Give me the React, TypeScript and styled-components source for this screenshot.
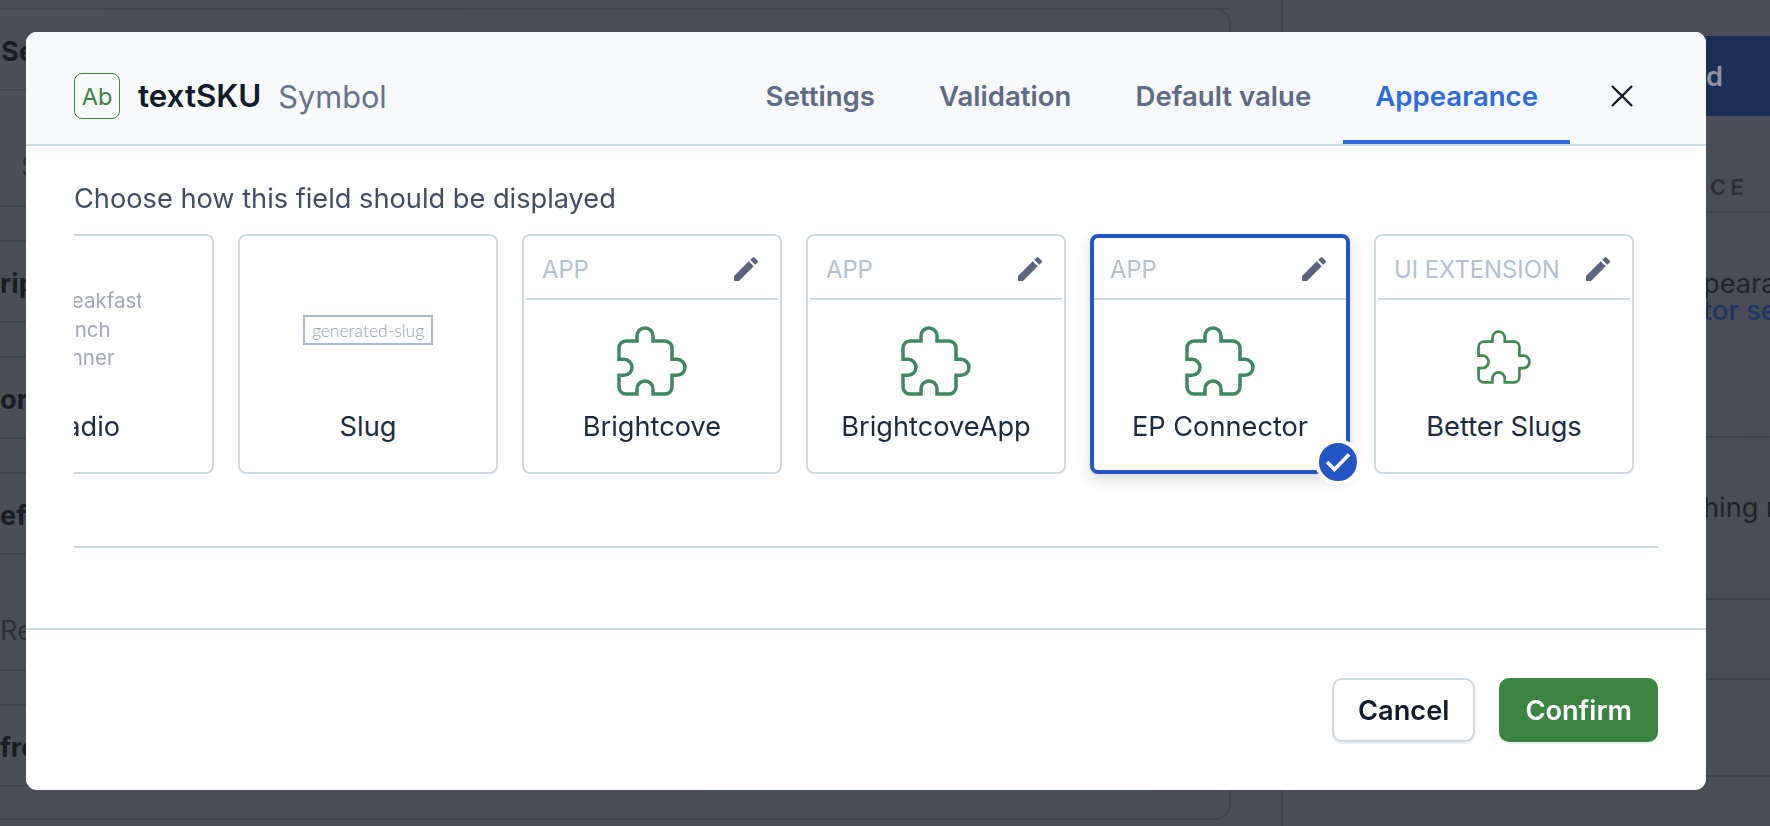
import React from "react";
import styled, { createGlobalStyle } from "styled-components";

const Global = createGlobalStyle`
  html, body { margin: 0; padding: 0; height: 100%; overflow: hidden; background: #4b4f55; }
  * { box-sizing: border-box; }
  body { font-family: Inter, "Liberation Sans", sans-serif; -webkit-font-smoothing: antialiased; }
`;

const Page = styled.div`
  width: 1770px;
  height: 826px;
  display: grid;
  grid-template-columns: 1231px 50px 489px;
  background: linear-gradient(120deg, #4c5056 0%, #4a4e55 60%, #494d54 100%);
  overflow: hidden;
`;

const BackList = styled.div`
  margin-top: 8px;
  height: 812px;
  border: 2px solid #41464d;
  border-left: 0;
  border-radius: 0 16px 16px 0;
  display: flex;
  flex-direction: column;
  gap: 35px;
  margin-bottom: 6px;
`;

const BackRow = styled.div<{ $indent?: number; $soft?: boolean }>`
  height: 83px;
  flex: none;
  margin-top: -2px;
  border-bottom: 2px solid #41464d;
  border-top: ${(p) => (p.$soft ? "0" : "2px solid #41464d")};
  display: flex;
  align-items: center;
  padding: 4px 0 0 ${(p) => p.$indent ?? 0}px;
  font-size: 27.2px;
  font-weight: ${(p) => (p.$soft ? 400 : 700)};
  color: ${(p) => (p.$soft ? "#2a3039" : "#171c26")};
  white-space: nowrap;
`;

const Spacer = styled.div``;

const SidePanel = styled.aside`
  border-left: 2px solid #41464d;
  display: flex;
  flex-direction: column;
  padding-top: 36px;
`;

const PublishBar = styled.div`
  height: 80px;
  flex: none;
  background: #1a2f55;
  color: #8e95a3;
  font-size: 27.2px;
  font-weight: 600;
  display: flex;
  align-items: center;
  padding-left: 423px;
`;

const SideHeading = styled.div`
  height: 97px;
  flex: none;
  border-bottom: 2px solid #3f444b;
  padding: 56px 0 0 427px;
  font-size: 22px;
  font-weight: 600;
  letter-spacing: 4px;
  color: #2b3038;
  line-height: 30px;
`;

const SideSection = styled.div<{ $h: number; $top: number }>`
  height: ${(p) => p.$h}px;
  flex: none;
  border-bottom: 2px solid #3f444b;
  padding: ${(p) => p.$top}px 0 0 420px;
  font-size: 27.2px;
  line-height: 27px;
  color: #1e2229;
  white-space: nowrap;
`;

const SideLink = styled.div`
  color: #1c3563;
  font-weight: 500;
`;

const Modal = styled.div`
  position: fixed;
  left: 26px;
  top: 32px;
  width: 1680px;
  height: 758px;
  background: #fff;
  border-radius: 11px;
  display: flex;
  flex-direction: column;
  overflow: hidden;
`;

const Header = styled.header`
  height: 114px;
  flex: none;
  background: #f7f9fa;
  border-bottom: 2px solid #cfd9e0;
  display: flex;
  align-items: stretch;
  padding-left: 48px;
`;

const TitleGroup = styled.div`
  display: flex;
  align-items: center;
  padding-top: 16px;
  flex: 1;
`;

const TypeBadge = styled.div`
  width: 46px;
  height: 46px;
  border: 1.8px solid #3c8442;
  border-radius: 8px;
  display: flex;
  align-items: center;
  justify-content: center;
  color: #3c8442;
  font-size: 23.5px;
  font-weight: 400;
  margin-right: 18px;
`;

const Title = styled.span`
  font-size: 31.3px;
  font-weight: 600;
  color: #111b2b;
  margin-right: 17px;
`;

const TitleType = styled.span`
  font-size: 30.7px;
  color: #67728a;
`;

const Tabs = styled.nav`
  display: flex;
  align-items: stretch;
`;

const Tab = styled.div<{ $active?: boolean }>`
  padding: 20px 32px 0;
  display: flex;
  align-items: center;
  font-size: 27.6px;
  font-weight: 600;
  color: ${(p) => (p.$active ? "#2f6bdc" : "#5f6a84")};
  border-bottom: 4px solid ${(p) => (p.$active ? "#2f6bdc" : "transparent")};
`;

const CloseButton = styled.div`
  width: 48px;
  margin: 16px 60px 0 28px;
  display: flex;
  align-items: center;
  justify-content: center;
  color: #111b2b;
`;

const Body = styled.main`
  flex: 1;
  padding: 33px 48px 0;
`;

const Intro = styled.div`
  font-size: 27.2px;
  line-height: 40px;
  color: #414d63;
  margin-bottom: 15px;
`;

const CardClip = styled.div`
  overflow: hidden;
  padding-bottom: 24px;
`;

const CardTrack = styled.div`
  display: flex;
  gap: 24px;
  margin-left: -120px;
`;

const Card = styled.div<{ $selected?: boolean }>`
  position: relative;
  flex: none;
  width: 260px;
  height: 240px;
  background: #fff;
  border-radius: 8px;
  border: ${(p) => (p.$selected ? "4px solid #2355c5" : "2px solid #cfd9e0")};
  padding: ${(p) => (p.$selected ? "0" : "2px")};
  box-shadow: ${(p) => (p.$selected ? "0 6px 14px rgba(25,40,70,.16)" : "none")};
  display: flex;
  flex-direction: column;
`;

const CardHead = styled.div`
  height: 62px;
  flex: none;
  margin-top: 0;
  border-bottom: 2px solid #cfd9e0;
  display: flex;
  align-items: center;
  justify-content: space-between;
  padding: 2px 16px 0 16px;
`;

const Origin = styled.span`
  font-size: 23.8px;
  color: #b4c0cf;
`;

const Preview = styled.div`
  flex: 1;
  padding-top: 15px;
  display: flex;
  align-items: center;
  justify-content: center;
`;

const CardName = styled.div`
  flex: none;
  height: 40px;
  margin-bottom: 23px;
  font-size: 27.2px;
  line-height: 40px;
  text-align: center;
  color: #1c2a3e;
  white-space: nowrap;
`;

const ChoiceList = styled.div`
  width: 122px;
  margin-right: 8px;
  overflow: hidden;
  padding-left: 32px;
  font-size: 20.5px;
  line-height: 28.7px;
  color: #a3a8b5;
  white-space: nowrap;
`;

const SlugBox = styled.div`
  width: 130px;
  height: 30px;
  border: 2px solid #aeb8cc;
  display: flex;
  align-items: center;
  justify-content: center;
  font-family: Lato, sans-serif;
  font-size: 17.5px;
  font-weight: 300;
  color: #969dac;
`;

const PuzzleSvg = styled.svg<{ $small?: boolean }>`
  display: block;
  margin-bottom: ${(p) => (p.$small ? "8px" : "0")};
`;

const CheckBadge = styled.div`
  position: absolute;
  right: -15px;
  bottom: -15px;
  width: 46px;
  height: 46px;
  border-radius: 50%;
  background: #2355c5;
  border: 4px solid #fff;
  display: flex;
  align-items: center;
  justify-content: center;
`;

const Rule = styled.hr`
  border: 0;
  height: 2px;
  background: #cfd9e0;
  margin: 48px 0 0;
`;

const Footer = styled.footer`
  flex: none;
  height: 162px;
  border-top: 2px solid #cfd9e0;
  padding: 48px 48px 48px;
  display: flex;
  justify-content: flex-end;
  gap: 24px;
`;

const Button = styled.div<{ $primary?: boolean }>`
  height: 64px;
  padding: 0 ${(p) => (p.$primary ? "26px" : "24px")};
  display: flex;
  align-items: center;
  border-radius: 10px;
  font-size: 27.2px;
  font-weight: 600;
  color: ${(p) => (p.$primary ? "#fff" : "#111b2b")};
  background: ${(p) => (p.$primary ? "#3c8442" : "#fff")};
  border: ${(p) => (p.$primary ? "0" : "2px solid #cfd9e0")};
  box-shadow: 0 2px 1px rgba(17, 27, 43, 0.08);
`;

const Pencil = () => (
  <svg width="32" height="32" viewBox="0 0 24 24" fill="#5b6580" aria-hidden="true">
    <path d="M3 17.25V21h3.75L17.81 9.94l-3.75-3.75L3 17.25z" />
    <path d="M20.71 7.04a1 1 0 0 0 0-1.41l-2.34-2.34a1 1 0 0 0-1.41 0l-1.83 1.83 3.75 3.75 1.83-1.83z" />
  </svg>
);

const Puzzle = ({ size = 70, color = "#3d8763" }: { size?: number; color?: string }) => (
  <PuzzleSvg $small={size < 70} width={size} height={size} viewBox="0 0 70 70" fill="none" stroke={color} strokeWidth="3.5" aria-hidden="true">
    <path d="M2 22a7 7 0 0 1 7-7H20V10a8 8 0 0 1 16 0V15H48a7 7 0 0 1 7 7V33.3H60a8 8 0 0 1 0 16H55V61a7 7 0 0 1-7 7H36V63a8 8 0 0 0-16 0V68H9a7 7 0 0 1-7-7V49.3H7a8 8 0 0 0 0-16H2Z" />
  </PuzzleSvg>
);

const AppCard = ({ origin, name, selected, small }: { origin: string; name: string; selected?: boolean; small?: boolean }) => (
  <Card $selected={selected}>
    <CardHead>
      <Origin>{origin}</Origin>
      <Pencil />
    </CardHead>
    <Preview>
      {small ? <Puzzle size={54} color="#3f8a50" /> : <Puzzle />}
    </Preview>
    <CardName>{name}</CardName>
    {selected && (
      <CheckBadge>
        <svg width="28" height="22" viewBox="0 0 28 22" fill="none" stroke="#fff" strokeWidth="3.6" aria-hidden="true">
          <path d="M3 11l7.5 7.5L25 3.5" />
        </svg>
      </CheckBadge>
    )}
  </Card>
);

export default function App() {
  return (
    <>
      <Global />
      <Page>
        <BackList>
          <BackRow $indent={1}>Se</BackRow>
          <BackRow $indent={21} $soft>S</BackRow>
          <BackRow>rip</BackRow>
          <BackRow>or</BackRow>
          <BackRow>efe</BackRow>
          <BackRow $soft>Re</BackRow>
          <BackRow>fro</BackRow>
        </BackList>
        <Spacer />
        <SidePanel>
          <PublishBar>d</PublishBar>
          <SideHeading>CE</SideHeading>
          <SideSection $h={225} $top={57}>
            peara
            <SideLink>tor se</SideLink>
          </SideSection>
          <SideSection $h={162} $top={56}>hing m</SideSection>
          <SideSection $h={80} $top={0} />
          <SideSection $h={97} $top={0} />
        </SidePanel>
      </Page>
      <Modal>
        <Header>
          <TitleGroup>
            <TypeBadge>Ab</TypeBadge>
            <Title>textSKU</Title>
            <TitleType>Symbol</TitleType>
          </TitleGroup>
          <Tabs>
            <Tab>Settings</Tab>
            <Tab>Validation</Tab>
            <Tab>Default value</Tab>
            <Tab $active>Appearance</Tab>
          </Tabs>
          <CloseButton>
            <svg width="24" height="24" viewBox="0 0 24 24" fill="none" stroke="currentColor" strokeWidth="2.4" aria-hidden="true">
              <path d="M2 2l20 20M22 2L2 22" />
            </svg>
          </CloseButton>
        </Header>
        <Body>
          <Intro>Choose how this field should be displayed</Intro>
          <CardClip>
            <CardTrack>
              <Card>
                <Preview>
                  <ChoiceList>
                    Breakfast
                    <br />
                    Lunch
                    <br />
                    Dinner
                  </ChoiceList>
                </Preview>
                <CardName>Radio</CardName>
              </Card>
              <Card>
                <Preview>
                  <SlugBox>generated-slug</SlugBox>
                </Preview>
                <CardName>Slug</CardName>
              </Card>
              <AppCard origin="APP" name="Brightcove" />
              <AppCard origin="APP" name="BrightcoveApp" />
              <AppCard origin="APP" name="EP Connector" selected />
              <AppCard origin="UI EXTENSION" name="Better Slugs" small />
            </CardTrack>
          </CardClip>
          <Rule />
        </Body>
        <Footer>
          <Button>Cancel</Button>
          <Button $primary>Confirm</Button>
        </Footer>
      </Modal>
    </>
  );
}
